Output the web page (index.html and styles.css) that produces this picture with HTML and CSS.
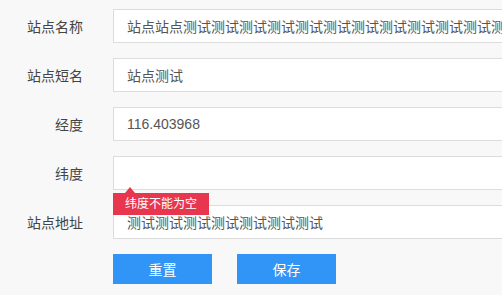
FILE: index.html
```html
<!DOCTYPE html>
<html lang="zh-CN">
<head>
  <meta charset="UTF-8">
  <title>站点编辑</title>
  <link rel="stylesheet" href="styles.css">
</head>
<body>

  <form class="site-form">
    <div class="row">
      <label class="label">站点名称</label>
      <div class="field">
        <input class="input" type="text" value="站点站点测试测试测试测试测试测试测试测试测试测试测试测试测试测试">
      </div>
    </div>
    <div class="row">
      <label class="label">站点短名</label>
      <div class="field">
        <input class="input" type="text" value="站点测试">
      </div>
    </div>
    <div class="row">
      <label class="label">经度</label>
      <div class="field">
        <input class="input" type="text" value="116.403968">
      </div>
    </div>
    <div class="row">
      <label class="label">纬度</label>
      <div class="field">
        <input class="input" type="text" value="">
        <div class="tip">纬度不能为空</div>
      </div>
    </div>
    <div class="row">
      <label class="label">站点地址</label>
      <div class="field">
        <input class="input" type="text" value="测试测试测试测试测试测试测试">
      </div>
    </div>
    <div class="actions">
      <button type="button" class="btn">重置</button>
      <button type="button" class="btn">保存</button>
    </div>
  </form>

</body>
</html>
```

FILE: styles.css
```css
body {
  margin: 0;
  background: #f8f8f8;
  font-family: "Liberation Sans", "Noto Sans CJK SC", sans-serif;
  font-size: 14px;
  color: #333;
}
.site-form {
  padding-top: 9px;
}
.row {
  display: flex;
  align-items: center;
  margin-bottom: 15px;
}
.label {
  width: 83px;
  text-align: right;
  margin-right: 30px;
  color: #444;
}
.field {
  position: relative;
  flex: 1;
}
.input {
  box-sizing: border-box;
  display: block;
  width: 100%;
  height: 34px;
  padding: 0 0 0 13px;
  border: 1px solid #dcdcdc;
  border-right: none;
  background: #fff;
  font-family: inherit;
  font-size: 14px;
  color: #555;
  outline: none;
}
.tip {
  position: absolute;
  left: 0;
  top: 37px;
  height: 22px;
  line-height: 22px;
  padding: 0 12px;
  background: #e8364f;
  color: #fff;
  font-size: 12px;
  z-index: 2;
}
.tip::before {
  content: "";
  position: absolute;
  left: 12px;
  top: -6px;
  border-left: 5px solid transparent;
  border-right: 5px solid transparent;
  border-bottom: 6px solid #e8364f;
}
.actions {
  display: flex;
  gap: 25px;
  padding-left: 113px;
  margin-top: 1px;
}
.btn {
  width: 99px;
  height: 30px;
  border: none;
  background: #3194f7;
  color: #fff;
  font-family: inherit;
  font-size: 14px;
  cursor: pointer;
}
.btn:hover {
  background: #1f7fe0;
}
```
